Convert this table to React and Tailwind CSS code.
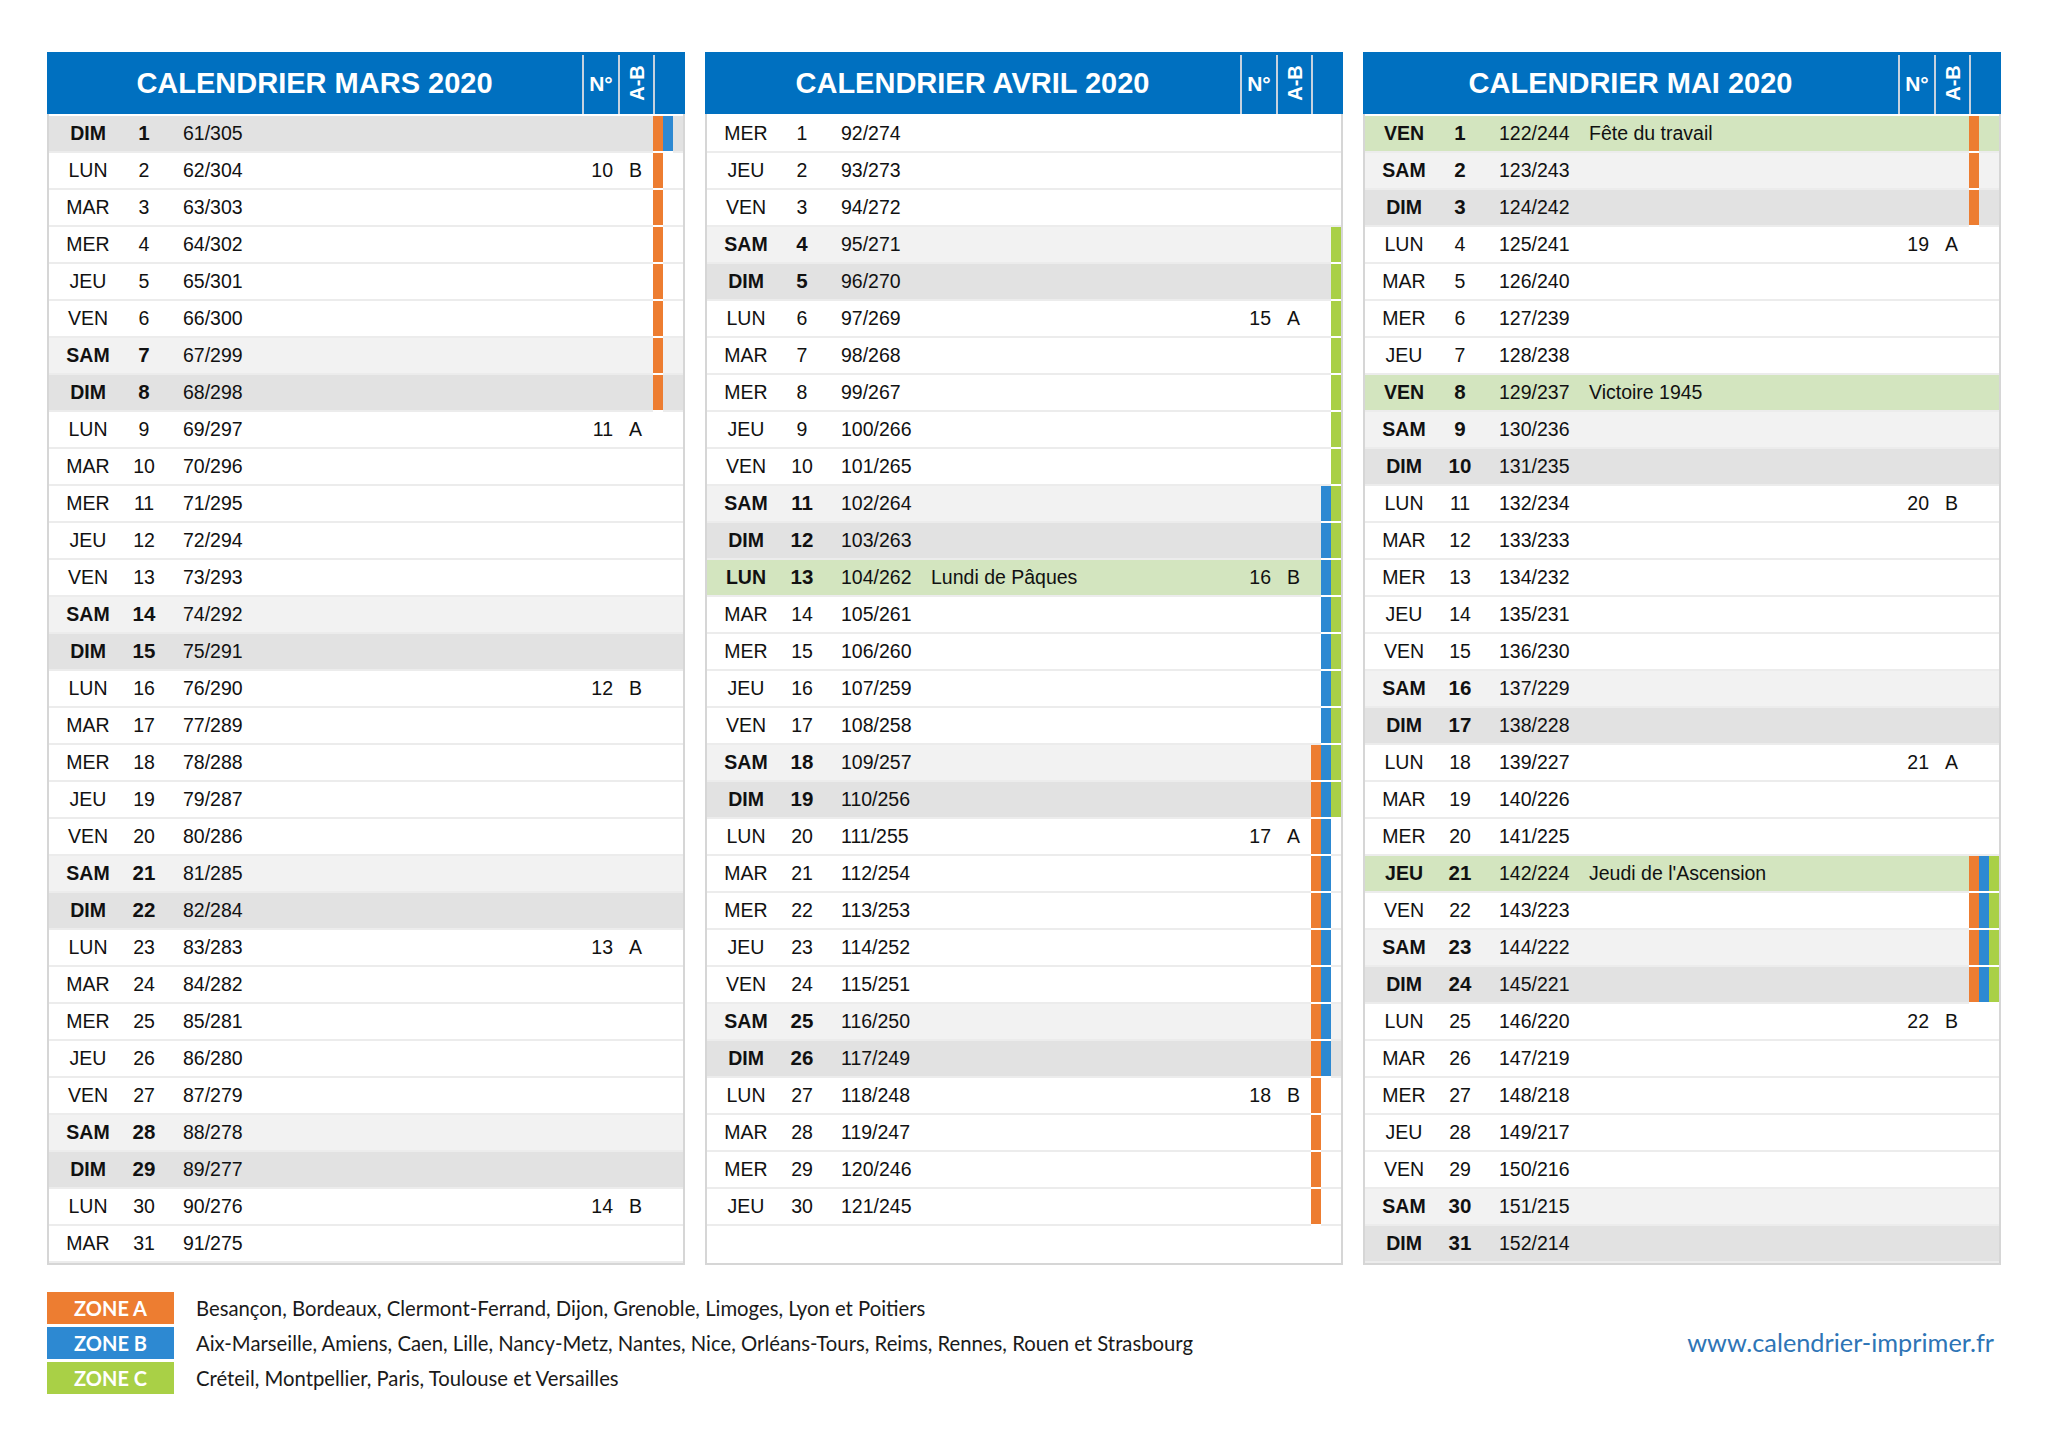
import React from "react";

const DAYS = ["DIM", "LUN", "MAR", "MER", "JEU", "VEN", "SAM"];

const ZONE_COLORS = ["bg-[#ed7d31]", "bg-[#2d89d2]", "bg-[#a9d046]"];

function inRange(d, ranges) {
  return ranges.some(([a, b]) => d >= a && d <= b);
}

function buildRows({ days, startDow, startDoy, holidays, weeks, zones }) {
  const rows = [];
  for (let d = 1; d <= days; d++) {
    const dow = (startDow + d - 1) % 7;
    const doy = startDoy + d - 1;
    rows.push({
      day: DAYS[dow],
      num: d,
      ratio: `${doy}/${366 - doy}`,
      holiday: holidays[d] || "",
      week: weeks[d] ? weeks[d][0] : "",
      ab: weeks[d] ? weeks[d][1] : "",
      kind: holidays[d] ? "hol" : dow === 0 ? "dim" : dow === 6 ? "sam" : "week",
      z: zones.map((r) => inRange(d, r)),
    });
  }
  return rows;
}

const MONTHS = [
  {
    title: "CALENDRIER MARS 2020",
    rows: buildRows({
      days: 31,
      startDow: 0,
      startDoy: 61,
      holidays: {},
      weeks: { 2: ["10", "B"], 9: ["11", "A"], 16: ["12", "B"], 23: ["13", "A"], 30: ["14", "B"] },
      zones: [[[1, 8]], [[1, 1]], []],
    }),
  },
  {
    title: "CALENDRIER AVRIL 2020",
    rows: buildRows({
      days: 30,
      startDow: 3,
      startDoy: 92,
      holidays: { 13: "Lundi de Pâques" },
      weeks: { 6: ["15", "A"], 13: ["16", "B"], 20: ["17", "A"], 27: ["18", "B"] },
      zones: [[[18, 30]], [[11, 26]], [[4, 19]]],
    }),
  },
  {
    title: "CALENDRIER MAI 2020",
    rows: buildRows({
      days: 31,
      startDow: 5,
      startDoy: 122,
      holidays: { 1: "Fête du travail", 8: "Victoire 1945", 21: "Jeudi de l'Ascension" },
      weeks: { 4: ["19", "A"], 11: ["20", "B"], 18: ["21", "A"], 25: ["22", "B"] },
      zones: [[[1, 3], [21, 24]], [[21, 24]], [[21, 24]]],
    }),
  },
];

const BG = {
  hol: "bg-[#d3e5bf]",
  dim: "bg-[#e2e2e2]",
  sam: "bg-[#f2f2f2]",
  week: "bg-white",
};

function Row({ r }) {
  const bold = r.kind !== "week";
  return (
    <div className={`flex h-[37px] items-center border-b-2 border-[#ececec] ${BG[r.kind]}`}>
      <div className={`w-[78px] text-center ${bold ? "font-bold" : ""}`}>{r.day}</div>
      <div className={`w-[34px] text-center ${bold ? "font-bold text-[20.5px]" : ""}`}>{r.num}</div>
      <div className="w-[112px] pl-[22px]">{r.ratio}</div>
      <div className="flex-1 whitespace-nowrap">{r.holiday}</div>
      <div className="w-[36px] text-right pr-[5px]">{r.week}</div>
      <div className="w-[35px] text-center">{r.ab}</div>
      <div className="w-[30px] h-[37px] self-start flex">
        {r.z.map((on, i) => (
          <div
            key={i}
            className={on ? `w-[10px] h-full border-b-2 border-white ${ZONE_COLORS[i]}` : "w-[10px] h-full"}
          />
        ))}
      </div>
    </div>
  );
}

function Panel({ title, rows }) {
  return (
    <div className="w-[638px] flex flex-col">
      <div className="h-[62px] bg-[#0070c0] flex text-white font-bold">
        <div className="w-[535px] flex items-center justify-center text-[29px] leading-none whitespace-nowrap">
          {title}
        </div>
        <div className="w-[36px] mt-[3px] border-l-2 border-[#c6d2df] flex items-center justify-center text-[21px] leading-none pb-[3px]">
          N°
        </div>
        <div className="w-[35px] mt-[3px] border-l-2 border-[#c6d2df] flex items-center justify-center pb-[3px]">
          <span className="-rotate-90 inline-block whitespace-nowrap text-[20px] leading-none">A-B</span>
        </div>
        <div className="w-[32px] mt-[3px] border-l-2 border-[#c6d2df]" />
      </div>
      <div className="h-[1151px] border-x-2 border-b-2 border-[#d6d6d6] pt-[2px] flex flex-col text-[19.5px] text-[#111] font-['Liberation_Sans',Arial,sans-serif]">
        {rows.map((r) => (
          <Row key={r.num} r={r} />
        ))}
      </div>
    </div>
  );
}

const LEGEND = [
  ["ZONE A", "bg-[#ed7d31]", "Besançon, Bordeaux, Clermont-Ferrand, Dijon, Grenoble, Limoges, Lyon et Poitiers"],
  [
    "ZONE B",
    "bg-[#2d89d2]",
    "Aix-Marseille, Amiens, Caen, Lille, Nancy-Metz, Nantes, Nice, Orléans-Tours, Reims, Rennes, Rouen et Strasbourg",
  ],
  ["ZONE C", "bg-[#a9d046]", "Créteil, Montpellier, Paris, Toulouse et Versailles"],
];

export default function App() {
  return (
    <div className="w-[2048px] h-[1448px] bg-white pt-[52px] pl-[47px] font-['Liberation_Sans',Arial,sans-serif]">
      <div className="flex gap-[20px]">
        {MONTHS.map((m) => (
          <Panel key={m.title} title={m.title} rows={m.rows} />
        ))}
      </div>
      <div className="mt-[27px] w-[1947px] flex items-center justify-between font-['Lato',sans-serif]">
        <div className="flex flex-col gap-[3px]">
          {LEGEND.map(([label, bg, text]) => (
            <div key={label} className="flex items-center h-[32px]">
              <div className={`w-[127px] h-full flex items-center justify-center text-white font-bold text-[20px] ${bg}`}>
                {label}
              </div>
              <div className="ml-[22px] text-[20.3px] text-[#1a1a1a] whitespace-nowrap">{text}</div>
            </div>
          ))}
        </div>
        <div className="text-[25.3px] text-[#2e75b6] whitespace-nowrap">www.calendrier-imprimer.fr</div>
      </div>
    </div>
  );
}
